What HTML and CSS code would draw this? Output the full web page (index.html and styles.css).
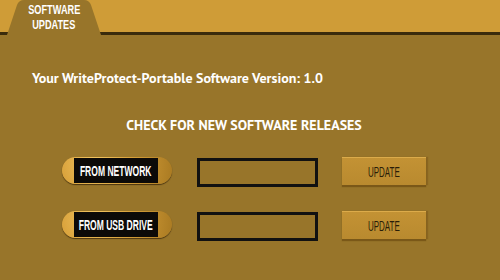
FILE: index.html
```html
<!DOCTYPE html>
<html lang="en">
<head>
    <meta charset="UTF-8">
    <meta name="viewport" content="width=device-width, initial-scale=1.0">
    <title>Software Updates</title>
    <link rel="stylesheet" href="styles.css">
</head>
<body>
    <header class="top-bar">
        <div class="tab">
            <span class="narrow">SOFTWARE</span>
            <span class="narrow">UPDATES</span>
        </div>
    </header>

    <main class="panel">
        <p class="version">Your WriteProtect-Portable Software Version: 1.0</p>

        <section class="updates">
            <h2 class="updates-title">CHECK FOR NEW SOFTWARE RELEASES</h2>

            <div class="update-row">
                <div class="source-pill"><div class="pill-face"><span class="narrow">FROM NETWORK</span></div></div>
                <input type="text" class="source-input">
                <button class="update-button"><span class="narrow">UPDATE</span></button>
            </div>

            <div class="update-row">
                <div class="source-pill"><div class="pill-face"><span class="narrow">FROM USB DRIVE</span></div></div>
                <input type="text" class="source-input">
                <button class="update-button"><span class="narrow">UPDATE</span></button>
            </div>
        </section>
    </main>
</body>
</html>
```

FILE: styles.css
```css
body {
    margin: 0;
    padding: 0;
    background-color: #98752a;
    color: #fff;
    font-family: "PT Sans", Lato, "Open Sans", sans-serif;
    height: 280px;
    overflow: hidden;
}

/* condensed headline look, no narrow font available */
.narrow {
    display: inline-block;
    white-space: nowrap;
    font-family: "Liberation Sans", Arial, sans-serif;
    transform: scaleX(0.61);
}

.top-bar {
    height: 32px;
    background-color: #cf9c37;
    border-bottom: 3px solid #3a2b0c;
    display: flex;
    align-items: flex-start;
}

.tab {
    margin-left: 7px;
    width: 94px;
    height: 35px;
    flex-shrink: 0;
    display: flex;
    flex-direction: column;
    align-items: center;
    background-color: #98752a;
    clip-path: path('M0 35 L10 5 Q12 0 17 0 L77 0 Q82 0 84 5 L94 35 Z');
    color: #fff;
    font-weight: bold;
    font-size: 13.5px;
    line-height: 15px;
    padding-top: 2px;
    box-sizing: border-box;
}

.tab .narrow {
    transform: scaleX(0.68);
}

.panel {
    padding-left: 32px;
}

.version {
    margin: 35px 0 0;
    font-size: 14px;
    font-weight: bold;
    line-height: 16px;
}

.updates {
    margin-left: 30px;
    width: 364px;
}

.updates-title {
    margin: 31px 0 24px;
    text-align: center;
    font-size: 14px;
    font-weight: bold;
    line-height: 16px;
}

.update-row {
    display: flex;
    align-items: flex-start;
    height: 54px;
}

.source-pill {
    width: 110px;
    height: 27px;
    box-sizing: border-box;
    padding: 1px 14px 1px 12px;
    border-radius: 14px;
    background: radial-gradient(circle at 30% 25%, #f5c966 0%, #d8a13a 45%, #a97a22 100%);
    box-shadow: 0 1px 1px #4a3510;
}

.pill-face {
    display: flex;
    align-items: center;
    justify-content: center;
    height: 25px;
    background-color: #0c0a08;
    color: #fff;
    font-weight: bold;
    font-size: 14px;
}

.source-input {
    margin: 1px 0 0 25px;
    width: 121px;
    height: 29px;
    box-sizing: border-box;
    border: 3px solid #111;
    background: transparent;
    padding: 0;
}

.update-button {
    margin-left: 24px;
    width: 84px;
    height: 28px;
    border: none;
    border-top: 1px solid #dcab4a;
    background: linear-gradient(#c39234, #b98a2f);
    box-shadow: 0 2px 1px #7a5818, 2px 0 1px #8a6520;
    color: #2a1d08;
    font-size: 14px;
    padding: 0;
}

.update-button .narrow {
    transform: scaleX(0.57);
}
```
